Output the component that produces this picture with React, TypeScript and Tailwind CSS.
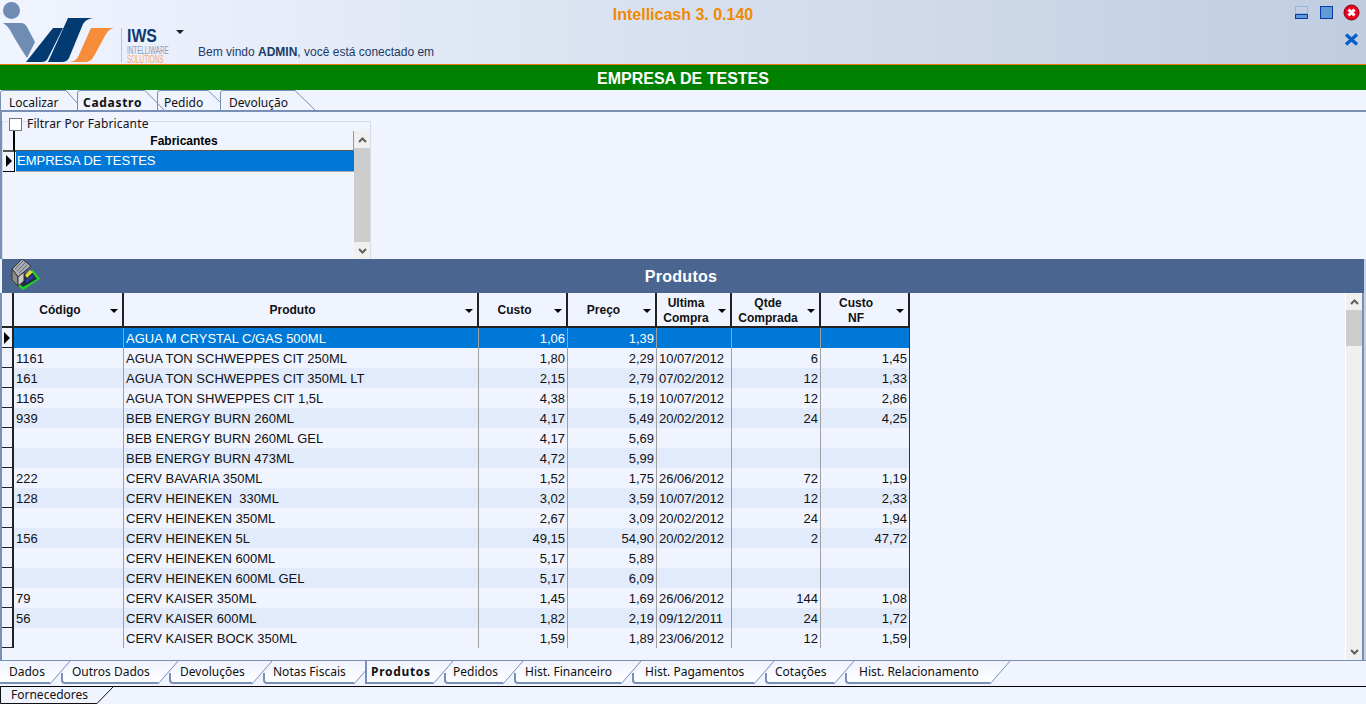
import React from 'react';

const rows = [
  ['', 'AGUA M CRYSTAL C/GAS 500ML', '1,06', '1,39', '', '', ''],
  ['1161', 'AGUA TON SCHWEPPES CIT 250ML', '1,80', '2,29', '10/07/2012', '6', '1,45'],
  ['161', 'AGUA TON SCHWEPPES CIT 350ML LT', '2,15', '2,79', '07/02/2012', '12', '1,33'],
  ['1165', 'AGUA TON SHWEPPES CIT 1,5L', '4,38', '5,19', '10/07/2012', '12', '2,86'],
  ['939', 'BEB ENERGY BURN 260ML', '4,17', '5,49', '20/02/2012', '24', '4,25'],
  ['', 'BEB ENERGY BURN 260ML GEL', '4,17', '5,69', '', '', ''],
  ['', 'BEB ENERGY BURN 473ML', '4,72', '5,99', '', '', ''],
  ['222', 'CERV BAVARIA 350ML', '1,52', '1,75', '26/06/2012', '72', '1,19'],
  ['128', 'CERV HEINEKEN  330ML', '3,02', '3,59', '10/07/2012', '12', '2,33'],
  ['', 'CERV HEINEKEN 350ML', '2,67', '3,09', '20/02/2012', '24', '1,94'],
  ['156', 'CERV HEINEKEN 5L', '49,15', '54,90', '20/02/2012', '2', '47,72'],
  ['', 'CERV HEINEKEN 600ML', '5,17', '5,89', '', '', ''],
  ['', 'CERV HEINEKEN 600ML GEL', '5,17', '6,09', '', '', ''],
  ['79', 'CERV KAISER 350ML', '1,45', '1,69', '26/06/2012', '144', '1,08'],
  ['56', 'CERV KAISER 600ML', '1,82', '2,19', '09/12/2011', '24', '1,72'],
  ['', 'CERV KAISER BOCK 350ML', '1,59', '1,89', '23/06/2012', '12', '1,59'],
];

const columns = "grid grid-cols-[12px_110px_355px_89px_89px_75px_89px_89px]";

const headers = [
  { label: ['Código'], pr: 'pr-[16px]' },
  { label: ['Produto'], pr: 'pr-[16px]' },
  { label: ['Custo'], pr: 'pr-[16px]' },
  { label: ['Preço'], pr: 'pr-[16px]' },
  { label: ['Ultima', 'Compra'], pr: 'pr-[15px]' },
  { label: ['Qtde', 'Comprada'], pr: 'pr-[15px]' },
  { label: ['Custo', 'NF'], pr: 'pr-[17px]' },
];

const topTabs = [
  { label: 'Localizar', w: 'w-[77px]', pl: 'pl-[9px]', d: 'M0.5 21V3Q0.5 0.5 3 0.5H66L77 13' },
  { label: 'Cadastro', w: 'w-[80px]', pl: 'pl-[6px]', d: 'M0.5 21V3Q0.5 0.5 3 0.5H68L88 21', active: true },
  { label: 'Pedido', w: 'w-[63px]', pl: 'pl-[7px]', d: 'M0.5 21V3Q0.5 0.5 3 0.5H51L63 12' },
  { label: 'Devolução', w: 'w-[96px]', pl: 'pl-[9px]', d: 'M0.5 21V3Q0.5 0.5 3 0.5H75L96 21' },
];

const bottomTabs = [
  { label: 'Dados', w: 'w-[50px]', px: 50, pl: 'pl-[9px]', first: true },
  { label: 'Outros Dados', w: 'w-[108px]', px: 108, pl: 'pl-[22px]' },
  { label: 'Devoluções', w: 'w-[94px]', px: 94, pl: 'pl-[22px]' },
  { label: 'Notas Fiscais', w: 'w-[102px]', px: 102, pl: 'pl-[21px]', beforeActive: true },
  { label: 'Produtos', w: 'w-[79px]', px: 79, pl: 'pl-[17px]', active: true },
  { label: 'Pedidos', w: 'w-[70px]', px: 70, pl: 'pl-[20px]' },
  { label: 'Hist. Financeiro', w: 'w-[118px]', px: 118, pl: 'pl-[22px]' },
  { label: 'Hist. Pagamentos', w: 'w-[133px]', px: 133, pl: 'pl-[24px]' },
  { label: 'Cotações', w: 'w-[80px]', px: 80, pl: 'pl-[21px]' },
  { label: 'Hist. Relacionamento', w: 'w-[156px]', px: 156, pl: 'pl-[25px]' },
];

const tabFont = "font-['Noto_Sans',sans-serif] text-[12px] text-[#111]";

function Arrow() {
  return <span className="w-0 h-0 border-x-[4px] border-x-transparent border-t-[4px] border-t-black" />;
}

function Chevron({ down }: { down?: boolean }) {
  return (
    <svg width="9" height="6" viewBox="0 0 9 6" className={down ? 'rotate-180' : ''}>
      <path d="M1 5L4.5 1.5L8 5" fill="none" stroke="#606060" strokeWidth="2" />
    </svg>
  );
}

function Logo() {
  return (
    <div className="relative w-[190px] h-[64px] shrink-0">
      <svg width="120" height="64" viewBox="0 0 120 64" className="absolute left-0 top-0">
        <circle cx="11.5" cy="10.5" r="8.5" fill="#6f8db3" />
        <path d="M3 23H21Q25 23 27 27L35 42L27 58Q17 43 10 30Q8 26 3 23Z" fill="#6f8db3" />
        <path d="M53 28H63L48 58Q46 62 42 62H26Z" fill="#023a72" />
        <path d="M68 18H93Q86 19 83 24L69 58Q67 62 62 62H48Z" fill="#023a72" />
        <path d="M91 28H114Q109 29 106 34L94 56Q91 62 85 62H70Q76 61 78 57Z" fill="#f78c3a" />
      </svg>
      <div className="absolute left-[121px] top-[28px] w-px h-[34px] bg-[#b8c4d4]" />
      <div className="absolute left-[127px] top-[27px] flex flex-col font-['Liberation_Sans',sans-serif]">
        <span className="text-[18px] leading-[18px] font-bold text-[#0b3a70] scale-x-[0.88] origin-left">IWS</span>
        <span className="text-[10px] leading-[9px] mt-[1px] text-[#8a9ab0] scale-x-[0.63] origin-left">INTELLIWARE</span>
        <span className="text-[10px] leading-[10px] text-[#f5a869] scale-x-[0.63] origin-left">SOLUTIONS</span>
      </div>
    </div>
  );
}

function WindowButtons() {
  return (
    <div className="absolute right-0 top-0 w-[80px] h-[64px]">
      <svg width="80" height="50" viewBox="0 0 80 50">
        <rect x="9.5" y="6.5" width="12" height="7" fill="none" stroke="#6e9fd6" strokeDasharray="1 1" />
        <rect x="9.5" y="14.5" width="12" height="4" fill="#5f9ad6" stroke="#0a3aa8" />
        <rect x="34.5" y="6.5" width="12" height="12" fill="#619bd6" stroke="#0a3aa8" />
        <circle cx="65.5" cy="12.5" r="7.5" fill="#f00020" stroke="#800010" />
        <path d="M62.5 9.5L68.5 15.5M68.5 9.5L62.5 15.5" stroke="#fff" strokeWidth="3" />
        <path d="M60 34.5L71 44.5M71 34.5L60 44.5" stroke="#0a5fc8" strokeWidth="3.4" />
      </svg>
    </div>
  );
}

function Header() {
  return (
    <header className="relative h-[65px] flex border-b border-[#f07800] bg-gradient-to-r from-[#f0f4ff] to-[#c0cde0] font-['Liberation_Sans',sans-serif]">
      <Logo />
      <svg width="8" height="4" viewBox="0 0 8 4" className="absolute left-[176px] top-[30px]">
        <path d="M0 0H8L4 4Z" fill="#222" />
      </svg>
      <p className="absolute left-[198px] top-[44px] text-[12px] leading-[16px] text-[#1c3a68]">
        Bem vindo <b>ADMIN</b>, você está conectado em
      </p>
      <p className="absolute left-0 right-0 top-[6px] text-center text-[16px] leading-[18px] font-bold text-[#f08a00]">
        Intellicash 3. 0.140
      </p>
      <WindowButtons />
    </header>
  );
}

function TopTabs() {
  return (
    <div className="flex h-[22px] border-b-2 border-[#7a8fb5]">
      {topTabs.map((t) => (
        <div key={t.label} className={`relative ${t.w} h-[20px] ${t.pl} ${tabFont} leading-[25px] ${t.active ? 'font-bold z-10 tracking-[0.7px]' : ''}`}>
          <svg width="10" height="21" viewBox="0 0 10 21" className="absolute left-0 top-0 overflow-visible">
            <path d={t.d} fill="none" stroke="#7a8fb5" />
          </svg>
          <span className="relative">{t.label}</span>
        </div>
      ))}
    </div>
  );
}

function BottomTabs() {
  return (
    <div className="flex h-[26px] border-t border-[#7a8fb5]">
      {bottomTabs.map((t, i) => {
        const w = t.px;
        const left = t.first ? 'M0 22' : t.active ? 'M12 0V22' : 'M12 12V19Q12 22 15 22';
        const fill = t.first ? `M0 0H${w + 20}L${w} 23H0Z` : t.active ? `M12 0H${w + 20}L${w} 23H12Z` : `M23 0H${w + 20}L${w} 23H12V12Z`;
        const stop = t.beforeActive ? 12 : 20;
        return (
          <div key={t.label} className={`relative ${t.w} h-[25px] ${t.pl} ${tabFont} leading-[21px] ${t.active ? 'font-bold tracking-[0.7px]' : ''}`}>
            <svg width="10" height="25" viewBox="0 0 10 25" className="absolute left-0 top-0 overflow-visible">
              <defs>
                <linearGradient id={`tab-fill-${i}`} x1="0" y1="0" x2="0" y2="1">
                  <stop offset="0" stopColor="#f0f4ff" />
                  <stop offset="1" stopColor="#ffffff" />
                </linearGradient>
              </defs>
              <path d={fill} fill={`url(#tab-fill-${i})`} />
              <path d={`${left}H${w}`} fill="none" stroke="#7a8fb5" strokeWidth="2" />
              <path d={`M${w} 23L${w + stop} ${23 - (stop * 23) / 20}`} fill="none" stroke="#7a8fb5" />
            </svg>
            <span className="relative">{t.label}</span>
          </div>
        );
      })}
    </div>
  );
}

function FabricantesBox() {
  return (
    <div className="relative mt-[9px] w-[369px] h-[138px] border-l border-t border-r border-[#d8dde6]">
      <label className={`absolute left-[6px] -top-[5px] flex items-center gap-[5px] ${tabFont} leading-[14px] tracking-[0.15px]`}>
        <span className="w-[13px] h-[13px] border border-[#777] bg-white" />
        Filtrar Por Fabricante
      </label>
      <div className="flex h-full pt-[9px]">
        <div className="w-[351px] text-[13px] font-['Liberation_Sans',sans-serif]">
          <div className="grid grid-cols-[12px_339px] h-[20px]">
            <div className="bg-[#f0f4ff] border-r-2 border-black border-b-2 border-b-[#555]" />
            <div className="flex items-center justify-center text-[12px] font-bold bg-[#f0f4ff] border-b-2 border-[#555] border-r border-r-[#999] pt-[1px]">Fabricantes</div>
          </div>
          <div className="grid grid-cols-[12px_339px] h-[20px]">
            <div className="flex items-center justify-center border-r border-b border-black pl-[1px]">
              <span className="w-0 h-0 border-y-[6px] border-y-transparent border-l-[6px] border-l-black" />
            </div>
            <div className="ml-[1px] pl-[1px] bg-[#0078d7] text-white leading-[20px] border-b border-[#aaa]">EMPRESA DE TESTES</div>
          </div>
        </div>
        <div className="w-[17px] flex flex-col bg-[#f0f0f0]">
          <div className="h-[17px] flex items-center justify-center"><Chevron /></div>
          <div className="flex-1 bg-[#cdcdcd]" />
          <div className="h-[17px] flex items-center justify-center"><Chevron down /></div>
        </div>
      </div>
    </div>
  );
}

function PrinterIcon() {
  return (
    <svg width="32" height="34" viewBox="0 0 32 34" className="shrink-0">
      <path d="M2 21L14 31L31 20L24 11Z" fill="#1fd41f" />
      <path d="M5 19L14 28L28 20L22 12Z" fill="#1f2c44" />
      <path d="M3 10L13 0L22 7L9 18Z" fill="#a9abb2" stroke="#333" />
      <path d="M6 10L14 2M8 12L16 4M10 14L18 6" stroke="#6b6f80" />
      <path d="M3 10L9 18V27L3 21Z" fill="#8e8e8e" stroke="#333" />
      <path d="M9 18L15 13V22L9 27Z" fill="#c9c9c9" stroke="#333" />
      <path d="M16 16L21 11L24 13L18 19Z" fill="#e5d33c" />
      <path d="M17 21L24 16V19L17 24Z" fill="#2b3fa8" />
    </svg>
  );
}

function ProductGrid() {
  return (
    <div className="flex-1 min-h-0 flex">
      <div className="w-[908px] text-[13px] text-[#111] font-['Liberation_Sans',sans-serif]">
        <div className={`${columns} h-[35px] border-b-2 border-[#222] text-[12px]`}>
          <div className="bg-[#f0f4ff] border-r-2 border-[#222]" />
          {headers.map((h, i) => (
            <div key={i} className={`relative flex flex-col items-center justify-center leading-[15px] font-bold bg-[#f0f4ff] border-r-2 border-[#222] pt-[2px] ${h.pr}`}>
              {h.label.map((l) => <span key={l}>{l}</span>)}
              <span className="absolute right-[4px] top-[16px] flex"><Arrow /></span>
            </div>
          ))}
        </div>
        {rows.map((r, i) => {
          const selected = i === 0;
          const bg = selected ? 'bg-[#0078d7] text-white' : i % 2 === 0 ? 'bg-[#e2ebfb]' : 'bg-[#f0f4ff]';
          return (
            <div key={i} className={`${columns} h-[20px] leading-[22px]`}>
              <div className="flex items-center justify-center border-r-2 border-b border-[#222] bg-[#f0f4ff] pr-[1px]">
                {selected && <span className="w-0 h-0 border-y-[6px] border-y-transparent border-l-[6px] border-l-black" />}
              </div>
              {r.map((c, j) => (
                <div
                  key={j}
                  className={`${bg} h-[20px] whitespace-pre border-r border-[#a0a0a0] truncate ${j === 0 || j === 1 || j === 4 ? 'pl-[2px] text-left' : 'pr-[2px] text-right'} ${j === 6 ? 'border-r-[#333]' : ''}`}
                >
                  {c}
                </div>
              ))}
            </div>
          );
        })}
      </div>
      <div className="flex-1" />
      <div className="w-[17px] flex flex-col bg-[#f0f0f0] border-l border-white">
        <div className="h-[17px] flex items-center justify-center"><Chevron /></div>
        <div className="h-[36px] bg-[#cdcdcd]" />
        <div className="flex-1" />
        <div className="h-[17px] flex items-center justify-center"><Chevron down /></div>
      </div>
    </div>
  );
}

export default function App() {
  return (
    <div className="w-[1366px] h-[704px] overflow-hidden flex flex-col bg-[#f0f4ff]">
      <Header />
      <div className="h-[25px] bg-[#008000] flex items-center justify-center text-white font-bold text-[16px] font-['Liberation_Sans',sans-serif] pt-[2px]">
        EMPRESA DE TESTES
      </div>
      <TopTabs />
      <div className="h-[147px] flex items-start border-l-2 border-[#7a8fb5]">
        <FabricantesBox />
      </div>
      <div className="ml-[2px] h-[34px] bg-[#4a6590] flex items-center pl-[7px] pr-[37px] border-r-[2px] border-[#c9d3e6]">
        <PrinterIcon />
        <div className="flex-1 text-center text-white font-bold text-[16px] tracking-[0.3px] font-['Liberation_Sans',sans-serif] pr-[6px] pt-[2px]">Produtos</div>
      </div>
      <div className="h-[367px] flex border-r-2 border-[#c9d3e6]">
        <div className="flex-1 min-w-0 flex border-l-2 border-r-2 border-[#7a8fb5]">
          <ProductGrid />
        </div>
      </div>
      <BottomTabs />
      <div className="h-[18px] border-t border-black flex">
        <div className={`relative w-[97px] h-[17px] pl-[11px] ${tabFont} leading-[16px]`}>
          <svg width="10" height="17" viewBox="0 0 10 17" className="absolute left-0 top-0 overflow-visible">
            <path d="M0.5 0V16.5H97L113 0" fill="none" stroke="#111" />
          </svg>
          <span className="relative">Fornecedores</span>
        </div>
      </div>
    </div>
  );
}
